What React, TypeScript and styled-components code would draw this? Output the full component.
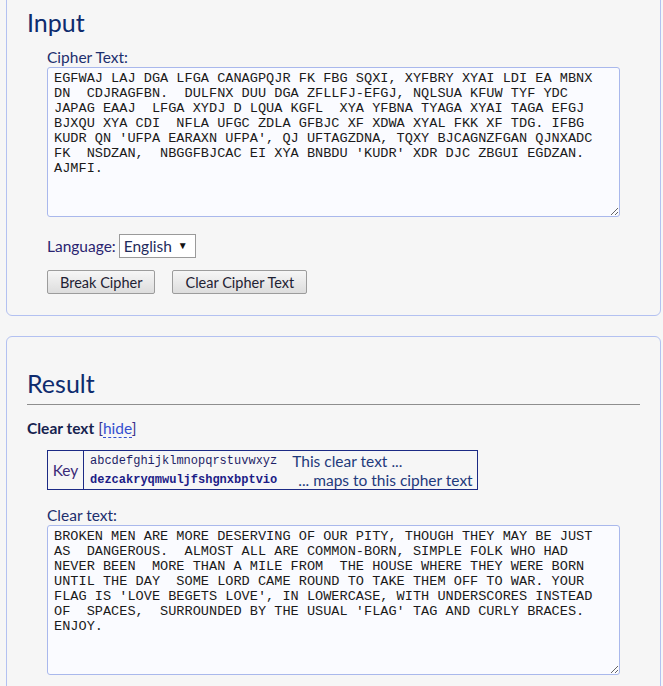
import React from "react";
import styled, { createGlobalStyle } from "styled-components";

const GlobalStyle = createGlobalStyle`
  body {
    margin: 0;
    background: #f6f6f6;
    font-family: Lato, "Open Sans", sans-serif;
    color: #1b2a66;
  }
`;

const Page = styled.div`
  margin-top: -25px;
  padding: 0 2px 20px 6px;
`;

const Panel = styled.section`
  border: 1px solid #b3c1f1;
  border-radius: 6px;
  padding: 0 20px 21px;
  & + & {
    margin-top: 20px;
  }
`;

const Title = styled.h2<{ $rule?: boolean }>`
  margin: 0;
  padding-top: 30px;
  padding-bottom: ${(p) => (p.$rule ? "5px" : "0")};
  font-size: 25px;
  font-weight: 400;
  line-height: 32px;
  color: #0e2c6e;
  border-bottom: ${(p) => (p.$rule ? "1px solid #8e8e8e" : "none")};
`;

const Field = styled.div<{ $top: number }>`
  margin: ${(p) => p.$top}px 20px 0;
`;

const Label = styled.label`
  display: block;
  font-size: 15.5px;
  line-height: 20px;
  color: #1d2f6e;
`;

const TextBox = styled.textarea`
  display: block;
  box-sizing: border-box;
  width: 100%;
  height: 150px;
  margin: 0;
  padding: 3px 6px;
  border: 1px solid #a9b8ec;
  border-radius: 3px;
  background: #fafbff;
  color: #1a1a1a;
  font-family: "Liberation Mono", "Courier New", monospace;
  font-size: 13.6px;
  line-height: 15px;
  outline: none;
`;

const Row = styled.div<{ $gap: number }>`
  display: flex;
  align-items: center;
  gap: ${(p) => p.$gap}px;
  height: 24px;
`;

const InlineLabel = styled.span`
  font-size: 15.5px;
  color: #2a2470;
`;

const SelectWrap = styled.span`
  position: relative;
  display: inline-block;
`;

const Select = styled.select`
  appearance: none;
  box-sizing: border-box;
  width: 77px;
  height: 24px;
  padding: 0 0 0 4px;
  border: 1px solid #9a9a9a;
  border-radius: 0;
  background: #fff;
  color: #1f2c5c;
  font-family: Lato, "Open Sans", sans-serif;
  font-size: 15.5px;
`;

const Arrow = styled.span`
  position: absolute;
  right: 8px;
  top: 5px;
  font-size: 10px;
  color: #111;
  pointer-events: none;
`;

const Button = styled.button`
  height: 24px;
  padding: 0 12px;
  border: 1px solid #9c9c9c;
  border-radius: 2px;
  background: linear-gradient(#f6f6f6, #dddddd);
  color: #1e2233;
  font-family: Lato, "Open Sans", sans-serif;
  font-size: 14.5px;
`;

const Toggle = styled.div`
  margin-top: 13px;
  font-size: 15.5px;
  line-height: 20px;
  color: #3a2f8a;
  & b {
    color: #16234f;
  }
`;

const HideLink = styled.a`
  color: #3550d0;
  text-decoration: none;
  border-bottom: 1px dashed #3550d0;
`;

const KeyTable = styled.div`
  display: inline-flex;
  margin: 12px 0 0 20px;
  border: 1px solid #1c2a85;
`;

const KeyCell = styled.div`
  display: flex;
  align-items: center;
  justify-content: center;
  width: 35px;
  border-right: 1px solid #1c2a85;
  font-size: 15.5px;
  color: #3a2a78;
`;

const KeyBody = styled.div`
  padding: 1px 4px 0 6px;
`;

const KeyRow = styled.div<{ $gap: number }>`
  display: flex;
  align-items: center;
  gap: ${(p) => p.$gap}px;
  height: 18.5px;
`;

const Letters = styled.span<{ $bold?: boolean }>`
  font-family: "Liberation Mono", "Courier New", monospace;
  font-size: 12px;
  font-weight: ${(p) => (p.$bold ? 700 : 400)};
  color: ${(p) => (p.$bold ? "#1c1c86" : "#1e1e66")};
`;

const Note = styled.span`
  font-size: 15.5px;
  color: #1f3a7c;
`;

const cipher = [
  "EGFWAJ LAJ DGA LFGA CANAGPQJR FK FBG SQXI, XYFBRY XYAI LDI EA MBNX",
  "DN  CDJRAGFBN.  DULFNX DUU DGA ZFLLFJ-EFGJ, NQLSUA KFUW TYF YDC",
  "JAPAG EAAJ  LFGA XYDJ D LQUA KGFL  XYA YFBNA TYAGA XYAI TAGA EFGJ",
  "BJXQU XYA CDI  NFLA UFGC ZDLA GFBJC XF XDWA XYAL FKK XF TDG. IFBG",
  "KUDR QN 'UFPA EARAXN UFPA', QJ UFTAGZDNA, TQXY BJCAGNZFGAN QJNXADC",
  "FK  NSDZAN,  NBGGFBJCAC EI XYA BNBDU 'KUDR' XDR DJC ZBGUI EGDZAN.",
  "AJMFI.",
].join("\n");

const clear = [
  "BROKEN MEN ARE MORE DESERVING OF OUR PITY, THOUGH THEY MAY BE JUST",
  "AS  DANGEROUS.  ALMOST ALL ARE COMMON-BORN, SIMPLE FOLK WHO HAD",
  "NEVER BEEN  MORE THAN A MILE FROM  THE HOUSE WHERE THEY WERE BORN",
  "UNTIL THE DAY  SOME LORD CAME ROUND TO TAKE THEM OFF TO WAR. YOUR",
  "FLAG IS 'LOVE BEGETS LOVE', IN LOWERCASE, WITH UNDERSCORES INSTEAD",
  "OF  SPACES,  SURROUNDED BY THE USUAL 'FLAG' TAG AND CURLY BRACES.",
  "ENJOY.",
].join("\n");

export default function App() {
  return (
    <Page>
      <GlobalStyle />
      <Panel>
        <Title>Input</Title>
        <Field $top={9}>
          <Label>Cipher Text:</Label>
          <TextBox defaultValue={cipher} spellCheck={false} />
        </Field>
        <Field $top={17}>
          <Row $gap={3}>
            <InlineLabel>Language:</InlineLabel>
            <SelectWrap>
              <Select defaultValue="en">
                <option value="en">English</option>
              </Select>
              <Arrow>▼</Arrow>
            </SelectWrap>
          </Row>
        </Field>
        <Field $top={12}>
          <Row $gap={17}>
            <Button>Break Cipher</Button>
            <Button>Clear Cipher Text</Button>
          </Row>
        </Field>
      </Panel>
      <Panel>
        <Title $rule>Result</Title>
        <Toggle>
          <b>Clear text</b> [<HideLink href="#">hide</HideLink>]
        </Toggle>
        <KeyTable>
          <KeyCell>Key</KeyCell>
          <KeyBody>
            <KeyRow $gap={15}>
              <Letters>abcdefghijklmnopqrstuvwxyz</Letters>
              <Note>This clear text ...</Note>
            </KeyRow>
            <KeyRow $gap={21}>
              <Letters $bold>dezcakryqmwuljfshgnxbptvio</Letters>
              <Note>... maps to this cipher text</Note>
            </KeyRow>
          </KeyBody>
        </KeyTable>
        <Field $top={15}>
          <Label>Clear text:</Label>
          <TextBox defaultValue={clear} spellCheck={false} />
        </Field>
      </Panel>
    </Page>
  );
}
